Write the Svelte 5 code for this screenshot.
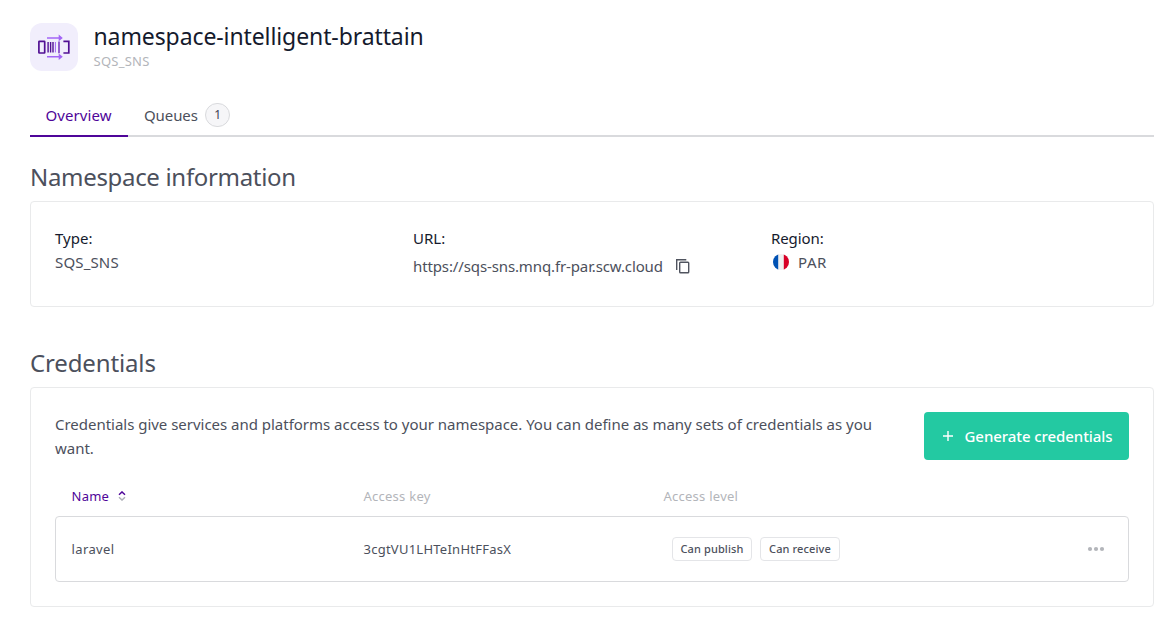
<script>
  const permissions = ['Can publish', 'Can receive'];
</script>

<main>
  <header>
    <div class="product">
      <svg width="34" height="28" viewBox="0 0 34 28" fill="none">
        <g stroke="#521094" stroke-width="1.7">
          <rect x="1.9" y="8.4" width="5.8" height="11.6" rx=".4" />
          <path d="M11.1 9v10.4M13.6 9v10.4M16 9v10.4" stroke-width="1.4" />
          <path d="M18.4 9v10.4" stroke="#a365f6" stroke-width="1" />
          <path d="M22 8.4v11.8" stroke="#6a22bb" stroke-width="1.4" />
          <path d="M26.4 8.4h5.4v11.6h-5.4" />
        </g>
        <path d="M10 4.9h13M10 23.8h13" stroke="#a365f6" stroke-width="1.5" />
        <path d="M21.7 1.6l4.1 3.3-4.1 3.3zM21.7 20.5l4.1 3.3-4.1 3.3z" fill="#a365f6" />
      </svg>
    </div>
    <div>
      <h1>namespace-intelligent-brattain</h1>
      <p class="kind">SQS_SNS</p>
    </div>
  </header>

  <nav>
    <a class="tab active" href="#overview">Overview</a>
    <a class="tab" href="#queues"><span class="queues">Queues</span><span class="count">1</span></a>
  </nav>

  <h2 class="info-title">Namespace information</h2>
  <section class="card info">
    <div>
      <div class="label type">Type:</div>
      <div class="value kindvalue">SQS_SNS</div>
    </div>
    <div>
      <div class="label">URL:</div>
      <div class="value url">
        <span>https://sqs-sns.mnq.fr-par.scw.cloud</span>
        <svg width="16" height="16" viewBox="0 0 16 16" fill="none" stroke="#50545f" stroke-width="1.4">
          <path d="M1.7 12V1.7h9.6" />
          <rect x="4.7" y="4.2" width="9" height="10.6" rx=".8" />
        </svg>
      </div>
    </div>
    <div>
      <div class="label region-label">Region:</div>
      <div class="value region">
        <svg width="16" height="16" viewBox="0 0 16 16">
          <clipPath id="flag"><circle cx="8" cy="8" r="8" /></clipPath>
          <g clip-path="url(#flag)">
            <path fill="#f0f0f0" d="M0 0h16v16H0z" />
            <path fill="#0052b4" d="M0 0h5.2v16H0z" />
            <path fill="#d80027" d="M10.8 0H16v16h-5.2z" />
          </g>
        </svg>
        <span>PAR</span>
      </div>
    </div>
  </section>

  <h2 class="cred-title">Credentials</h2>
  <section class="card creds">
    <div class="intro">
      <p>Credentials give services and platforms access to your namespace. You can define as many sets of credentials as you want.</p>
      <button>
        <svg width="12" height="12" viewBox="0 0 12 12" stroke="#fff" stroke-width="1.4"><path d="M6 1v10M1 6h10" /></svg>
        <span>Generate credentials</span>
      </button>
    </div>
    <div class="row head">
      <div class="name">
        <span>Name</span>
        <svg width="8" height="10" viewBox="0 0 8 10" fill="none" stroke-width="1.4">
          <path d="M1 3.8l3-2.9 3 2.9" stroke="#4f0599" />
          <path d="M1 6.2l3 2.9 3-2.9" stroke="#aeb0b8" />
        </svg>
      </div>
      <div>Access key</div>
      <div>Access level</div>
    </div>
    <div class="row body">
      <div class="user">laravel</div>
      <div>3cgtVU1LHTeInHtFFasX</div>
      <div class="tags">
        {#each permissions as permission}
          <span class="tag">{permission}</span>
        {/each}
      </div>
      <svg width="18" height="6" viewBox="0 0 18 6" fill="#b3b5ba">
        <circle cx="3" cy="3" r="2.1" /><circle cx="9" cy="3" r="2.1" /><circle cx="15" cy="3" r="2.1" />
      </svg>
    </div>
  </section>
</main>

<style>
  :global(body) { background: #fff; }
  main {
    box-sizing: border-box;
    width: 1170px;
    height: 626px;
    padding: 23px 16px 0 30px;
    font: 15px/24px "Noto Sans", sans-serif;
    color: #4c505c;
  }
  h1, h2, p { margin: 0; font-weight: 400; }
  svg { display: block; flex: none; }
  header { display: flex; gap: 15.5px; height: 48px; }
  .product {
    display: flex;
    align-items: center;
    justify-content: center;
    width: 48px;
    height: 48px;
    border-radius: 12px;
    background: #f1eefc;
  }
  h1 { font-size: 23px; line-height: 27px; letter-spacing: -.1px; color: #151a2d; }
  .kind { font-size: 13px; line-height: 22px; letter-spacing: .24px; color: #b3b5ba; }
  nav {
    display: flex;
    height: 40px;
    margin-top: 24px;
    border-bottom: 2px solid #d9dadd;
  }
  .tab {
    display: flex;
    align-items: center;
    gap: 8px;
    height: 40px;
    padding: 0 16px;
    color: #4c505c;
    text-decoration: none;
  }
  .active {
    box-sizing: border-box;
    width: 98px;
    height: 42px;
    padding-left: 15.5px;
    letter-spacing: .07px;
    color: #4f0599;
    border-bottom: 2px solid #4f0599;
  }
  .queues { letter-spacing: -.1px; }
  .count {
    box-sizing: border-box;
    width: 25px;
    height: 24px;
    margin-left: -.5px;
    border: 1px solid #d9dadd;
    border-radius: 12px;
    background: #f6f6f8;
    font-size: 12px;
    line-height: 22px;
    text-align: center;
    color: #3f4250;
  }
  h2 { font-size: 24px; line-height: 32px; }
  .info-title { margin-top: 24px; letter-spacing: -.32px; }
  .cred-title { margin-top: 40px; letter-spacing: -.14px; }
  .card {
    box-sizing: border-box;
    margin-top: 8px;
    padding: 24px;
    border: 1px solid #e9eaeb;
    border-radius: 4px;
  }
  .info { display: grid; grid-template-columns: repeat(3, 358px); height: 106px; }
  .label { color: #151a2d; }
  .type { letter-spacing: 0; }
  .region-label { letter-spacing: -.1px; }
  .kindvalue { letter-spacing: .15px; }
  .url { display: flex; align-items: center; gap: 12px; height: 32px; letter-spacing: -.12px; }
  .region { display: flex; align-items: center; gap: 9px; padding-left: 2px; letter-spacing: .6px; }
  .creds { height: 220px; }
  .intro { display: flex; justify-content: space-between; height: 48px; }
  .intro p { width: 830px; letter-spacing: -.02px; }
  button {
    display: flex;
    align-items: center;
    gap: 10.5px;
    width: 205px;
    height: 48px;
    padding: 0 0 0 18px;
    border: 0;
    border-radius: 4px;
    background: #23c9a2;
    color: #fff;
    font: 500 15px/24px "Noto Sans", sans-serif;
    letter-spacing: -.07px;
    white-space: nowrap;
  }
  .row {
    display: grid;
    grid-template-columns: 292px 300px 1fr auto;
    align-items: center;
    box-sizing: border-box;
    font-size: 13px;
    letter-spacing: .25px;
  }
  .head { height: 40px; margin-top: 16px; padding: 0 16.5px; color: #b3b5ba; }
  .name { display: flex; align-items: center; gap: 8.5px; color: #4f0599; }
  .body { height: 66px; padding: 0 23px 0 15.5px; border: 1px solid #d9dadd; border-radius: 4px; }
  .user { letter-spacing: .38px; }
  .tags { display: flex; gap: 8px; padding-left: 8.5px; }
  .tag {
    box-sizing: border-box;
    width: 80px;
    height: 24px;
    border: 1px solid #e4e5e8;
    border-radius: 4px;
    font-size: 11px;
    font-weight: 500;
    line-height: 22px;
    letter-spacing: .11px;
    text-align: center;
    white-space: nowrap;
  }
</style>
